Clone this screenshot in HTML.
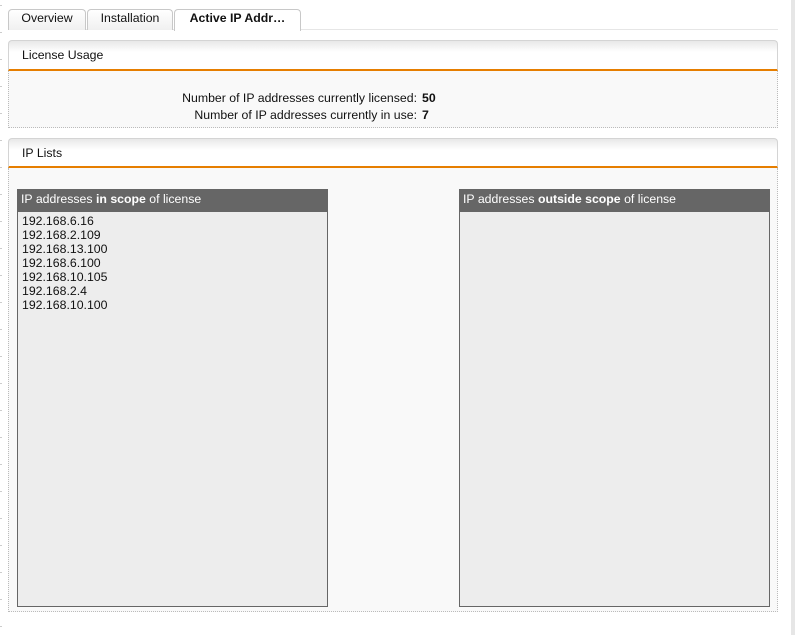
<!DOCTYPE html>
<html><head><style>
*{box-sizing:border-box}
body{margin:0;width:795px;height:635px;background:#fff;font-family:"Liberation Sans",sans-serif;font-size:12.3px;color:#111;position:relative;overflow:hidden}
.a{position:absolute}
.tab{top:9px;height:21px;border:1px solid #c8c8c8;border-bottom:none;border-radius:4px 4px 0 0;background:linear-gradient(#fff,#f0f0f0);text-align:center;line-height:17px}
.hdr{border:1px solid #d4d4d4;border-bottom:2px solid #e67e00;border-radius:4px 4px 0 0;background:linear-gradient(#e8e8e8,#fff 40%);padding-left:13px}
.body{border:1px dotted #bbb;border-top:none;background:#f9f9f9}
.lh{background:#666;color:#fff;padding-left:4px;line-height:20px;height:22px}
.lb{background:#ededed;border:1px solid #666}
</style></head><body>
<div class="a" style="left:0;top:0;width:2px;height:635px;background:repeating-linear-gradient(#fff 0 5px,#ccc 5px 6px,#fff 6px 27px)"></div>
<div class="a" style="left:791px;top:0;width:4px;height:635px;background:#e6e6e6"></div>
<div class="a" style="left:8px;top:29px;width:770px;height:1px;background:#e6e6e6"></div>
<div class="a tab" style="left:8px;width:78px">Overview</div>
<div class="a tab" style="left:87px;width:86px">Installation</div>
<div class="a tab" style="left:174px;width:127px;height:22px;background:#fff;font-weight:bold">Active IP Addr…</div>

<div class="a hdr" style="left:8px;top:40px;width:770px;height:31px;line-height:28px">License Usage</div>
<div class="a body" style="left:8px;top:71px;width:770px;height:57px"></div>
<div class="a" style="left:100px;top:90px;width:317px;text-align:right;line-height:17px">Number of IP addresses currently licensed:<br>Number of IP addresses currently in use:</div>
<div class="a" style="left:422px;top:90px;line-height:17px;font-weight:bold">50<br>7</div>

<div class="a hdr" style="left:8px;top:138px;width:770px;height:30px;line-height:28px">IP Lists</div>
<div class="a body" style="left:8px;top:168px;width:770px;height:444px"></div>
<div class="a" style="left:17px;top:189px;width:311px;height:418px">
<div class="lh">IP addresses <b>in scope</b> of license</div>
<div class="lb" style="height:396px;padding:2px 4px;line-height:14px">192.168.6.16<br>192.168.2.109<br>192.168.13.100<br>192.168.6.100<br>192.168.10.105<br>192.168.2.4<br>192.168.10.100</div>
</div>
<div class="a" style="left:459px;top:189px;width:311px;height:418px">
<div class="lh">IP addresses <b>outside scope</b> of license</div>
<div class="lb" style="height:396px"></div>
</div>
</body></html>
